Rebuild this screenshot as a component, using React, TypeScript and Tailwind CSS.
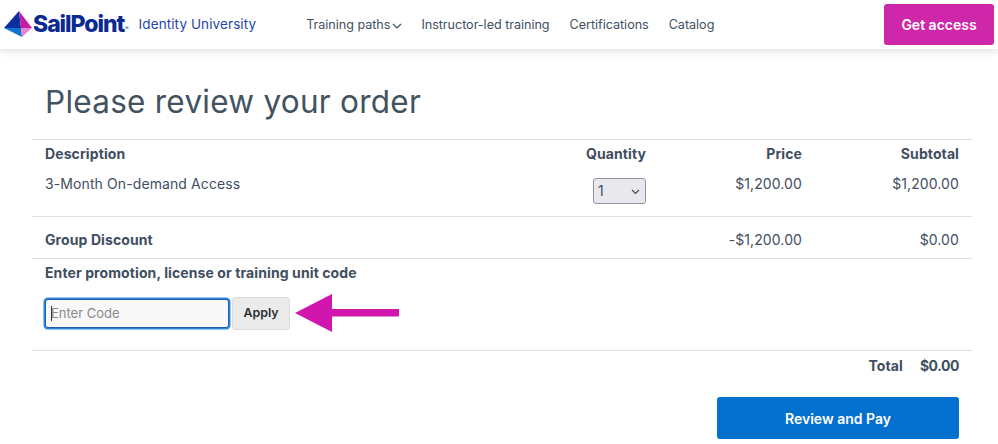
const font = { fontFamily: '"Inter", "Liberation Sans", sans-serif' };

function Logo() {
  return (
    <svg width="30" height="28" viewBox="0 0 30 28" className="shrink-0">
      <polygon points="15,1 0,18 17,18" fill="#0a2f9e" />
      <polygon points="15,1 17,18 28,18" fill="#c81ba6" />
      <polygon points="0,18 17,18 18,27" fill="#0f74cf" />
      <polygon points="17,18 28,18 18,27" fill="#e884d0" />
    </svg>
  );
}

function Header() {
  return (
    <header className="relative flex h-[49px] items-center bg-white shadow-[0_2px_8px_rgba(0,0,0,0.14)]">
      <div className="ml-[4px] mt-[-1px] flex items-center">
        <Logo />
        <span className="ml-[-1px] text-[23px] font-extrabold leading-none tracking-[-1.05px] text-[#0b2a8f]">SailPoint</span>
        <span className="ml-[1px] mt-[10px] text-[5px] text-[#0b2a8f]">®</span>
      </div>
      <span className="ml-[10px] text-[13.5px] tracking-[0.1px] text-[#1f48a8]">Identity University</span>
      <nav className="ml-[50px] mt-[1px] flex items-center text-[12.6px] tracking-[-0.03px] text-[#415062]">
        <span className="flex items-center">
          Training paths
          <svg width="10" height="10" viewBox="0 0 10 10" className="ml-[2px] mt-[2px]" fill="none" stroke="#415062" strokeWidth="1.2">
            <path d="M1 3l4 4 4-4" />
          </svg>
        </span>
        <span className="ml-[19px]">Instructor-led training</span>
        <span className="ml-[20px]">Certifications</span>
        <span className="ml-[20px]">Catalog</span>
      </nav>
      <button className="ml-auto mr-[4px] mt-[-1px] h-[41px] w-[110px] rounded-[3px] bg-[#cf27aa] text-[14px] font-semibold text-white">
        Get access
      </button>
    </header>
  );
}

function Row({ className, children }: { className: string; children: React.ReactNode }) {
  return <div className={`grid grid-cols-[1fr_157px_156px_157px] px-[13px] ${className}`}>{children}</div>;
}

export default function App() {
  return (
    <div className="h-[444px] w-[998px] overflow-hidden bg-white text-[#3f4e60]" style={font}>
      <Header />
      <main className="ml-[32px] w-[940px]">
        <h1 className="flex h-[90px] items-center px-[13px] pt-[15px] text-[31.5px] font-normal leading-none tracking-[0.26px] text-[#43525f]">
          Please review your order
        </h1>

        <Row className="h-[78px] content-start border-y border-[#dedede] pt-[4px] text-[14px] leading-[20px] tracking-[0.1px]">
          <div className="font-bold">Description</div>
          <div className="text-right font-bold">Quantity</div>
          <div className="text-right font-bold">Price</div>
          <div className="text-right font-bold">Subtotal</div>
          <div className="mt-[10px]">3-Month On-demand Access</div>
          <div className="mt-[14px] flex justify-end">
            <div className="flex h-[26px] w-[53px] items-center justify-between rounded-[3px] border border-[#8f95a3] bg-[#e9e9ed] pl-[4px] pr-[5px] text-[#3f4e60]">
              <span>1</span>
              <svg width="9" height="9" viewBox="0 0 9 9" fill="none" stroke="#3f4e60" strokeWidth="1.2">
                <path d="M1 3l3.5 3.5L8 3" />
              </svg>
            </div>
          </div>
          <div className="mt-[10px] text-right">$1,200.00</div>
          <div className="mt-[10px] text-right">$1,200.00</div>
        </Row>

        <Row className="h-[42px] items-center border-b border-[#dedede] pt-[4px] text-[14px] tracking-[0.1px]">
          <div className="font-bold">Group Discount</div>
          <div />
          <div className="text-right">-$1,200.00</div>
          <div className="text-right">$0.00</div>
        </Row>

        <section className="h-[92px] border-b border-[#dedede] px-[13px] pt-[5px]">
          <div className="text-[14px] font-bold leading-[18px] tracking-[0.1px]">Enter promotion, license or training unit code</div>
          <div className="mt-[12px] flex items-center">
            <div className="relative">
              <input
                placeholder="Enter Code"
                className="block h-[29px] w-[184px] rounded-[3px] border border-[#1d5fae] bg-[#f8f8f8] pl-[5px] text-[13px] shadow-[0_0_0_1.5px_#2f86dc] outline-none placeholder:text-[#8a8a8a]"
              />
              <span className="absolute left-[6px] top-[7px] h-[15px] w-px bg-[#333]" />
            </div>
            <button className="ml-[3px] h-[33px] w-[58px] rounded-[3px] border border-[#dcdcdc] bg-[#ebebeb] text-[12.4px] font-semibold text-[#2b2f36]">
              Apply
            </button>
            <svg width="104" height="38" viewBox="0 0 104 38" className="ml-[5px]">
              <polygon points="0,19 37,0 37,15 104,15 104,22.5 37,22.5 37,38" fill="#d016ad" />
            </svg>
          </div>
        </section>

        <div className="flex h-[29px] items-center justify-end gap-[17px] px-[13px] text-[14px] font-bold tracking-[0.1px]">
          <span>Total</span>
          <span className="tracking-[-0.45px]">$0.00</span>
        </div>
        <div className="mt-[17px] flex justify-end px-[13px]">
          <button className="h-[42px] w-[242px] rounded-[3px] bg-[#0571cf] text-[14px] font-semibold text-white">
            Review and Pay
          </button>
        </div>
      </main>
    </div>
  );
}
